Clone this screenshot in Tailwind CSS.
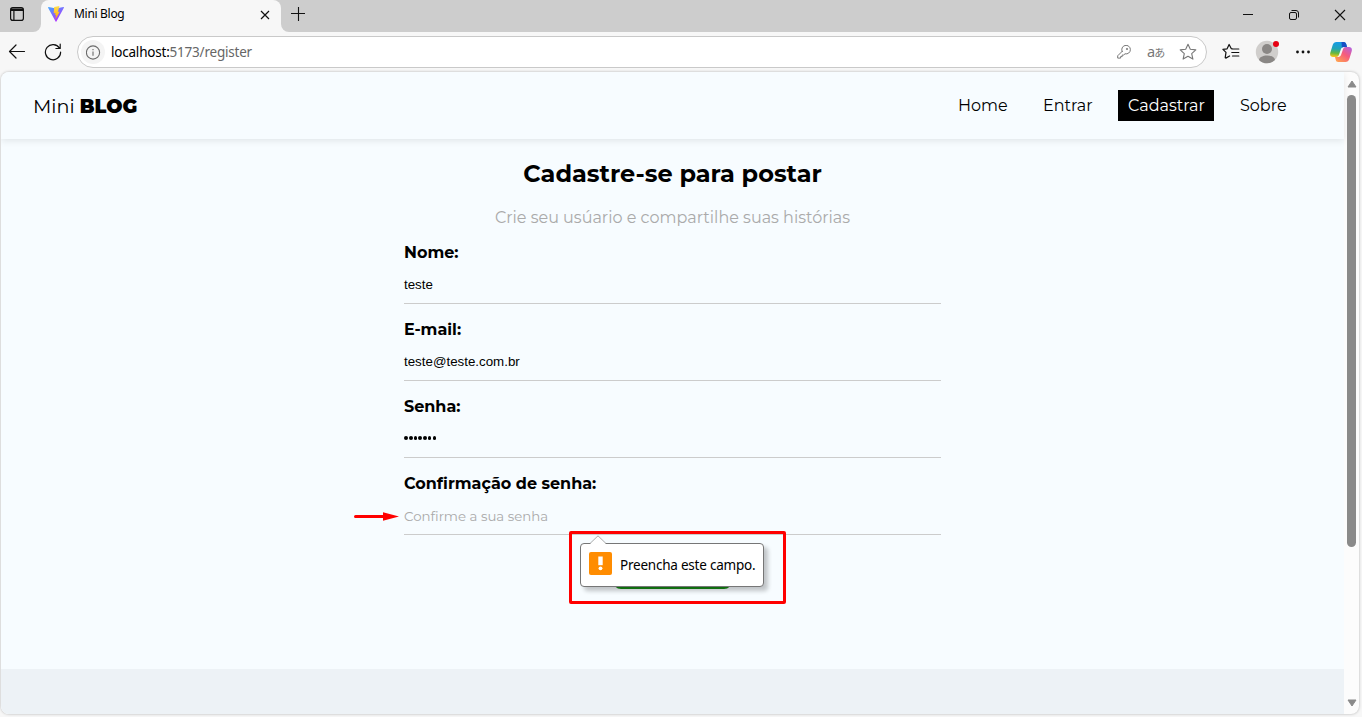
<!DOCTYPE html>
<html lang="pt-BR">
<head>
<meta charset="utf-8">
<title>Mini Blog</title>
<script src="https://cdn.jsdelivr.net/npm/@tailwindcss/browser@4"></script>
</head>
<body class="w-[1362px] h-[717px] overflow-hidden bg-[#f7f7f7] font-['Montserrat','Inter',sans-serif] text-black">
<div class="relative flex flex-col w-[1362px] h-[717px]">
  <!-- Tab strip -->
  <div class="flex h-8 shrink-0 bg-[#f7f7f7] font-['Noto_Sans','Open_Sans',sans-serif]">
    <div class="w-[41px] h-8 bg-[#cdcdcd] rounded-br-lg pt-[7px] pl-[10px]">
      <svg class="w-[14px] h-[14px]" viewBox="0 0 14 14" fill="none" stroke="#111" stroke-width="1.2"><rect x=".6" y=".6" width="12.8" height="12.8" rx="2.2"/><path d="M1 2.2h12M1 3.3h12M3.9 4v9"/></svg>
    </div>
    <div class="w-[240px] h-8 bg-[#cdcdcd]"><div class="flex w-[240px] h-8 rounded-t-lg bg-[#f7f7f7] pl-[7px]">
      <svg class="w-4 h-4 mt-[6px]" viewBox="0 0 16 16"><defs><linearGradient id="v" x1="0" y1="0" x2=".6" y2="1"><stop stop-color="#41a9ff"/><stop offset="1" stop-color="#b530ff"/></linearGradient><linearGradient id="y" x1="0" y1="0" x2="0" y2="1"><stop stop-color="#ffdf50"/><stop offset="1" stop-color="#ffa800"/></linearGradient></defs><path d="M.5 1 7 2.2h2L15.5 1c.4 0 .6.4.4.7L8.4 15.4c-.2.4-.6.4-.8 0L.1 1.7C0 1.4.2 1 .5 1Z" fill="url(#v)"/><path d="M11.4 0 6.2 1l-.5 6.3 1.8-.4-.5 2.4 1.2-.3-.8 4.3c1.6-2.6 3-5.2 4.3-7.8l-1.8.4L11.4 0Z" fill="url(#y)"/></svg>
      <span class="ml-[10px] mt-[5px] text-[12px] leading-[18px] tracking-[-0.3px]">Mini Blog</span>
      <svg class="w-[10px] h-[10px] mt-[10px] ml-auto mr-[11px]" viewBox="0 0 10 10" fill="none" stroke="#111" stroke-width="1.2"><path d="m1 1 8 8M9 1 1 9"/></svg>
    </div></div>
    <div class="flex flex-1 h-8 bg-[#cdcdcd] rounded-bl-lg">
      <svg class="w-[14px] h-[14px] mt-[7px] ml-[10px]" viewBox="0 0 14 14" stroke="#111" stroke-width="1.1"><path d="M0 6.5h14M7.5 0v14"/></svg>
      <div class="flex ml-auto mt-[9px]">
        <svg class="w-[10px] h-3 mr-[35px]" viewBox="0 0 10 12" stroke="#111"><path d="M0 5.5h10"/></svg>
        <svg class="w-3 h-3 mr-[34px]" viewBox="0 0 12 12" fill="none" stroke="#111"><rect x="1.5" y="3.5" width="7" height="7" rx="1.5"/><path d="M3.5 1.5H8A2.5 2.5 0 0 1 10.5 4v4.5"/></svg>
        <svg class="w-3 h-3 mr-4" viewBox="0 0 12 12" stroke="#111" stroke-width="1.1"><path d="m1 1 10 10M11 1 1 11"/></svg>
      </div>
    </div>
  </div>
  <!-- Toolbar -->
  <div class="flex h-10 shrink-0 items-center font-['Noto_Sans','Open_Sans',sans-serif]">
    <svg class="w-[18px] h-[18px] ml-2" viewBox="0 0 18 18" fill="none" stroke="#111" stroke-width="1.2" stroke-linecap="round" stroke-linejoin="round"><path d="M1.5 8.5h15M8 2 1.5 8.5 8 15"/></svg>
    <svg class="w-[18px] h-[18px] ml-[18px]" viewBox="0 0 18 18" fill="none" stroke="#111" stroke-width="1.2" stroke-linecap="round" stroke-linejoin="round"><path d="M15.5 5.2A7.6 7.6 0 1 0 16.6 9M16.2 1.2v4.3h-4.3"/></svg>
    <div class="flex items-center w-[1130px] h-8 ml-[15px] rounded-full bg-white border border-[#c9c9c9] pl-1">
      <div class="flex items-center justify-center size-6 -ml-px rounded-full bg-[#f4f4f4]"><svg class="size-[15px]" viewBox="0 0 15 15" fill="none" stroke="#6b6b6b" stroke-width="1.1"><circle cx="7" cy="7.5" r="6.6"/><path d="M7 6.5v4.3M7 4v1.3"/></svg></div>
      <span class="ml-[6px] text-[13.5px] leading-[18px] tracking-[-0.21px]">localhost:<span class="text-[#666]">5173/register</span></span>
      <div class="flex items-center ml-auto mr-[9px] text-[#777]">
        <svg class="size-[14px]" viewBox="0 0 14 14" fill="none" stroke="currentColor" stroke-linejoin="round"><path d="M5.3 6.7A4.3 4.3 0 1 1 8 8.8L6.7 10H5.2v1.6H3.6v1.5H.7v-2.3l4.7-4.7Z"/><circle cx="10" cy="4" r=".7"/></svg>
        <span class="ml-4 w-[18px] flex items-baseline text-[14.5px] leading-[18px] -mt-[3px]">a<span class="font-['Noto_Sans_CJK_JP',sans-serif] text-[11px] leading-[10px] -ml-px">あ</span></span>
        <svg class="size-[18px] ml-[14px]" viewBox="0 0 18 18" fill="none" stroke="currentColor" stroke-width="1.1" stroke-linejoin="round"><path d="m9 1.3 2.3 5 5.5.6-4.1 3.7 1.2 5.5L9 13.3l-4.9 2.8 1.2-5.5L1.2 6.9l5.5-.6Z"/></svg>
      </div>
    </div>
    <svg class="w-[18px] h-[18px] ml-[15px]" viewBox="0 0 18 18" fill="none" stroke="#111" stroke-width="1.2" stroke-linejoin="round" stroke-linecap="round"><path d="M10.3 5.9 9.2 5.6 7.1 1.5 5.1 5.8.9 6.3 4 9.4l-.8 5.3.6.4 3.8-2.1M11 6h5.8M9.8 9.5h7M10.5 13h6.3"/></svg>
    <svg class="w-6 h-6 ml-[15px]" viewBox="0 0 24 24"><circle cx="12" cy="12" r="11.2" fill="#d0cecc"/><circle cx="12" cy="9" r="5" fill="#8a8785"/><path d="M4 20c.4-6 15.6-6 16 0a11.2 11.2 0 0 1-16 0Z" fill="#8a8785"/><circle cx="21" cy="4" r="3" fill="#e60012"/></svg>
    <svg class="w-[14px] h-4 ml-[17px]" viewBox="0 0 14 16" fill="#111"><circle cx="1.5" cy="8" r="1.4"/><circle cx="7" cy="8" r="1.4"/><circle cx="12.5" cy="8" r="1.4"/></svg>
    <svg class="w-[22px] h-[22px] ml-5" viewBox="0 0 22 22"><defs><linearGradient id="a" x1=".4" y1="0" x2=".3" y2="1"><stop stop-color="#169be8"/><stop offset=".45" stop-color="#22a5b5"/><stop offset=".75" stop-color="#67b83d"/><stop offset="1" stop-color="#ffc51b"/></linearGradient><linearGradient id="b" x1="1" y1="0" x2=".2" y2="1"><stop stop-color="#ad63e9"/><stop offset=".5" stop-color="#f65b7d"/><stop offset="1" stop-color="#ffa052"/></linearGradient></defs><path d="M6.5 1h7.2c1.6 0 2.2 1 2.6 2.3L17 6h-3.2c-1.7 0-2.5.9-3 2.4L8.9 14c-.5 1.3-1.3 2-2.7 2H3c-2.2 0-3.4-1.5-2.7-4.2L2.7 4C3.3 2 4.7 1 6.5 1Z" fill="url(#a)"/><path d="M11.5 1h2.2c1.6 0 2.2 1 2.6 2.3L17 6h-3.2c-.8 0-1.4.2-1.9.6Z" fill="#174fc4"/><path d="M15.5 21H8.3c-1.6 0-2.2-1-2.6-2.3L5 16h3.2c1.7 0 2.5-.9 3-2.4L13.1 8c.5-1.3 1.3-2 2.7-2H19c2.2 0 3.4 1.5 2.7 4.2L19.3 18c-.6 2-2 3-3.8 3Z" fill="url(#b)"/></svg>
  </div>
  <!-- Page viewport -->
  <div class="flex w-[1358px] h-[642px] ml-px shrink-0 rounded-lg overflow-hidden bg-[#fcfcfc] shadow-[0_0_3px_rgba(0,0,0,0.28)]">
    <div class="flex flex-col w-[1343px] bg-[#f7fcff]">
      <header class="flex h-[67px] shrink-0 items-center justify-between pl-8 pr-[47px] shadow-[0_2px_7px_rgba(0,0,0,0.09)]">
        <div class="text-[19.2px] leading-6 mt-px">Mini <span class="font-black">BLOG</span></div>
        <nav class="flex gap-4 text-[16px] h-[31px] leading-[32px]">
          <a class="w-[69px] pl-[10px]">Home</a>
          <a class="w-[69px] pl-[10px]">Entrar</a>
          <a class="w-24 pl-[10px] bg-black text-white h-[31px]">Cadastrar</a>
          <a class="w-[67px] pl-[10px]">Sobre</a>
        </nav>
      </header>
      <main class="flex flex-col h-[530px] shrink-0 items-center">
        <h1 class="mt-5 text-[24px] leading-[30px] font-bold whitespace-nowrap">Cadastre-se para postar</h1>
        <p class="mt-[19px] text-[16px] leading-5 text-[#aaa] whitespace-nowrap">Crie seu usúario e compartilhe suas histórias</p>
        <form class="flex flex-col w-[537px] mt-[15px] gap-4 text-[16px]">
          <div class="flex flex-col h-[61px] border-b border-[#ccc]"><label class="font-bold leading-5">Nome:</label><span class="mt-[14px] text-[13.333px] leading-[15px] font-['Liberation_Sans',sans-serif]">teste</span></div>
          <div class="flex flex-col h-[61px] border-b border-[#ccc]"><label class="font-bold leading-5">E-mail:</label><span class="mt-[14px] text-[13.333px] leading-[15px] font-['Liberation_Sans',sans-serif]">teste@teste.com.br</span></div>
          <div class="flex flex-col h-[61px] border-b border-[#ccc]"><label class="font-bold leading-5">Senha:</label><span class="flex gap-[1.1px] mt-[19.3px] ml-[0.4px]"><i class="size-[3.6px] rounded-full bg-black"></i><i class="size-[3.6px] rounded-full bg-black"></i><i class="size-[3.6px] rounded-full bg-black"></i><i class="size-[3.6px] rounded-full bg-black"></i><i class="size-[3.6px] rounded-full bg-black"></i><i class="size-[3.6px] rounded-full bg-black"></i><i class="size-[3.6px] rounded-full bg-black"></i></span></div>
          <div class="flex flex-col h-[61px] border-b border-[#ccc]"><label class="font-bold leading-5">Confirmação de senha:</label><span class="mt-[14px] text-[13.333px] leading-4 text-[#aaa]">Confirme a sua senha</span></div>
        </form>
        <div class="w-[119px] h-[38px] mt-4 rounded-[8px] bg-[#148a14]"></div>
      </main>
      <footer class="flex-1 bg-[#edf2f6]"></footer>
    </div>
    <div class="flex flex-col items-center w-[15px]">
      <svg class="w-[10px] h-[8px] mt-[8px]" viewBox="0 0 10 8"><path d="M5 1 9 7H1Z" fill="#8a8a8a" stroke="#8a8a8a" stroke-linejoin="round"/></svg>
      <div class="w-[9px] h-[452px] mt-[7px] rounded-full bg-[#8a8a8a]"></div>
      <svg class="w-[10px] h-[8px] mt-auto mb-[7px]" viewBox="0 0 10 8"><path d="M5 7 9 1H1Z" fill="#8a8a8a" stroke="#8a8a8a" stroke-linejoin="round"/></svg>
    </div>
  </div>
  <!-- Validation bubble -->
  <div class="absolute left-[580px] top-[543px] flex items-center w-[184px] h-[44px] rounded-[4px] border border-[#767676] bg-white pl-2 shadow-[4px_4px_4px_rgba(0,0,0,0.22)] font-['Noto_Sans','Open_Sans',sans-serif]">
    <svg class="absolute left-[8px] -top-[9px] w-[18px] h-[10px]" viewBox="0 0 18 10"><path d="M1 9 9 1l8 8v1H1Z" fill="#fff"/><path d="M1 8.5 9 .8l8 7.7" fill="none" stroke="#aaa"/></svg>
    <svg class="size-[23px] -mt-[3px]" viewBox="0 0 23 23"><rect width="23" height="23" rx="2" fill="#ff8c00"/><path d="M9.3 4.5h4.4v8.7H9.3Z" fill="#fff"/><circle cx="11.5" cy="16.3" r="1.9" fill="#fff"/></svg>
    <span class="ml-2 text-[13.5px] leading-5 whitespace-nowrap tracking-[-0.22px]">Preencha este campo.</span>
  </div>
  <!-- Red annotations -->
  <div class="absolute left-[569px] top-[531px] w-[217px] h-[73px] border-3 border-[#f00] rounded-[2px]"></div>
  <svg class="absolute left-[354px] top-[511px] w-[46px] h-3" viewBox="0 0 46 12"><path d="M1.5 5.5H32" stroke="#f00" stroke-width="3" stroke-linecap="round"/><path d="M29 1.2 45 5.5 29 9.8Z" fill="#f00"/></svg>
</div>
</body>
</html>
